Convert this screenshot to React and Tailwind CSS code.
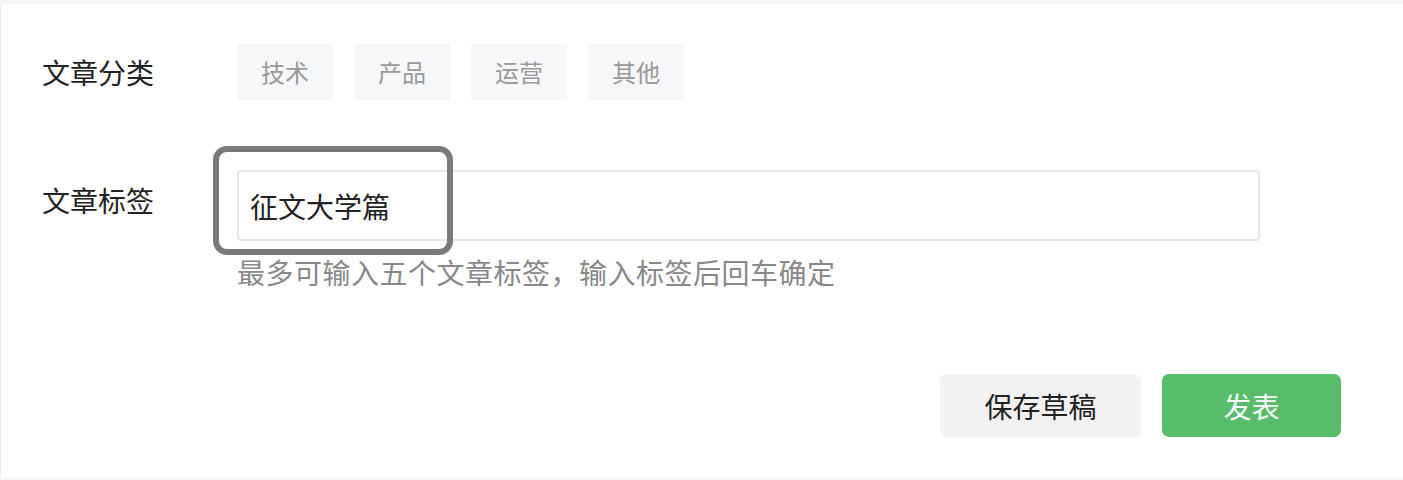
export default function App() {
  const font = { fontFamily: '"PingFang SC", "Noto Sans CJK SC", "Noto Sans", sans-serif' };
  const tags = ["技术", "产品", "运营", "其他"];
  return (
    <div className="w-[1403px] h-[480px] bg-[#f6f6f6] pt-[4px] pb-[3px] overflow-hidden" style={font}>
      <div className="relative h-[473px] bg-white border-l border-[#ededed] pl-[41px] pr-[62px]">
        <div className="flex items-center pt-[40px]">
          <div className="w-[195px] text-[28px] leading-[40px] text-[#222]">文章分类</div>
          <div className="flex gap-[21px]">
            {tags.map((t) => (
              <div
                key={t}
                className="w-[96px] h-[56px] flex items-center justify-center bg-[#f6f7f9] text-[24px] text-[#999]"
              >
                {t}
              </div>
            ))}
          </div>
        </div>

        <div className="flex items-start mt-[70px]">
          <div className="w-[195px] pt-[10px] text-[28px] leading-[40px] text-[#222]">文章标签</div>
          <div className="flex-1 mr-[80px]">
            <div className="h-[71px] w-[1023px] border-2 border-[#e6e6e6] rounded-[4px] flex items-center px-[11px] text-[28px] text-[#222]">
              征文大学篇
            </div>
            <div className="mt-[11px] text-[28px] leading-[40px] tracking-[0.5px] text-[#888]">
              最多可输入五个文章标签，输入标签后回车确定
            </div>
          </div>
        </div>

        <div className="flex justify-end gap-[21px] mt-[82px]">
          <button className="w-[201px] h-[63px] rounded-[7px] bg-[#f2f2f2] text-[28px] text-[#222]">保存草稿</button>
          <button className="w-[179px] h-[63px] rounded-[7px] bg-[#57bd6a] text-[28px] text-white">发表</button>
        </div>

        <div className="absolute left-[212px] top-[142px] w-[240px] h-[109px] border-[6px] border-[#7a7a7a] rounded-[14px] pointer-events-none"></div>
      </div>
    </div>
  );
}
